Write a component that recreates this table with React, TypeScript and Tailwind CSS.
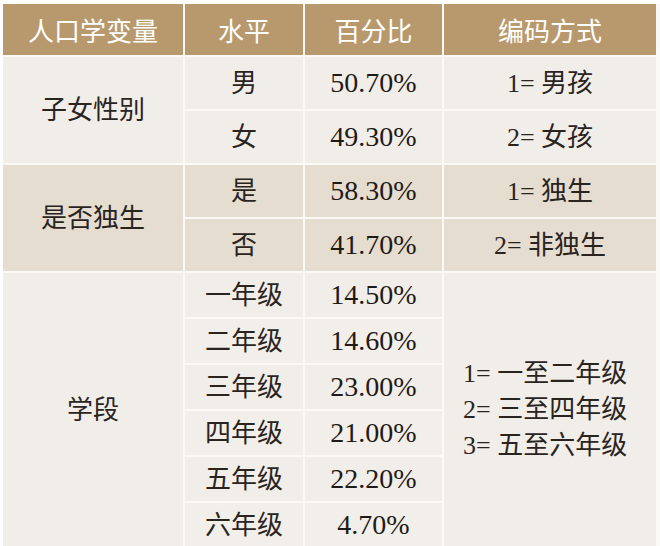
const serif = "font-['Liberation_Serif','Noto_Sans_CJK_SC',serif]";

const grades = [
  { level: '一年级', pct: '14.50%' },
  { level: '二年级', pct: '14.60%' },
  { level: '三年级', pct: '23.00%' },
  { level: '四年级', pct: '21.00%' },
  { level: '五年级', pct: '22.20%' },
  { level: '六年级', pct: '4.70%' },
];

function Cell({
  children,
  className = '',
}: {
  children: React.ReactNode;
  className?: string;
}) {
  return (
    <div className={`flex items-center justify-center ${className}`}>{children}</div>
  );
}

export default function App() {
  const light = 'bg-[#f1eee9]';
  const mid = 'bg-[#e5ddd0]';
  const num = 'text-[28px] text-[#1f1a16]';

  return (
    <div className="w-[660px] h-[546px] overflow-hidden bg-white pt-[4px] pl-[3px]">
      <div
        className={`grid grid-cols-[180px_118px_137px_212px] grid-rows-[51px_52px_52px_52px_52px_44px_44px_44px_44px_44px_44px] gap-[2px] bg-[#fbf9f5] text-[26px] text-[#2a241f] ${serif}`}
      >
        {/* Header */}
        {['人口学变量', '水平', '百分比', '编码方式'].map((h) => (
          <Cell
            key={h}
            className="bg-[#b8996d] text-white font-['Noto_Sans_CJK_SC',sans-serif] text-[26px]"
          >
            {h}
          </Cell>
        ))}

        {/* 子女性别 */}
        <Cell className={`${light} row-span-2`}>子女性别</Cell>
        <Cell className={light}>男</Cell>
        <Cell className={`${light} ${num}`}>50.70%</Cell>
        <Cell className={light}>1= 男孩</Cell>
        <Cell className={light}>女</Cell>
        <Cell className={`${light} ${num}`}>49.30%</Cell>
        <Cell className={light}>2= 女孩</Cell>

        {/* 是否独生 */}
        <Cell className={`${mid} row-span-2`}>是否独生</Cell>
        <Cell className={mid}>是</Cell>
        <Cell className={`${mid} ${num}`}>58.30%</Cell>
        <Cell className={mid}>1= 独生</Cell>
        <Cell className={mid}>否</Cell>
        <Cell className={`${mid} ${num}`}>41.70%</Cell>
        <Cell className={mid}>2= 非独生</Cell>

        {/* 学段 */}
        <Cell className={`${light} row-span-6`}>学段</Cell>
        <Cell className={`${light} col-start-2 row-start-6`}>{grades[0].level}</Cell>
        <Cell className={`${light} ${num} col-start-3 row-start-6`}>{grades[0].pct}</Cell>
        <div
          className={`${light} col-start-4 row-start-6 row-span-6 flex flex-col justify-center pl-[19px] leading-[36px]`}
        >
          <div>1= 一至二年级</div>
          <div>2= 三至四年级</div>
          <div>3= 五至六年级</div>
        </div>
        {grades.slice(1).map((g, i) => (
          <div key={g.level} className="contents">
            <Cell className={i % 2 === 0 ? 'bg-[#f2efea]' : light}>{g.level}</Cell>
            <Cell className={`${i % 2 === 0 ? 'bg-[#f2efea]' : light} ${num}`}>{g.pct}</Cell>
          </div>
        ))}
      </div>
    </div>
  );
}
